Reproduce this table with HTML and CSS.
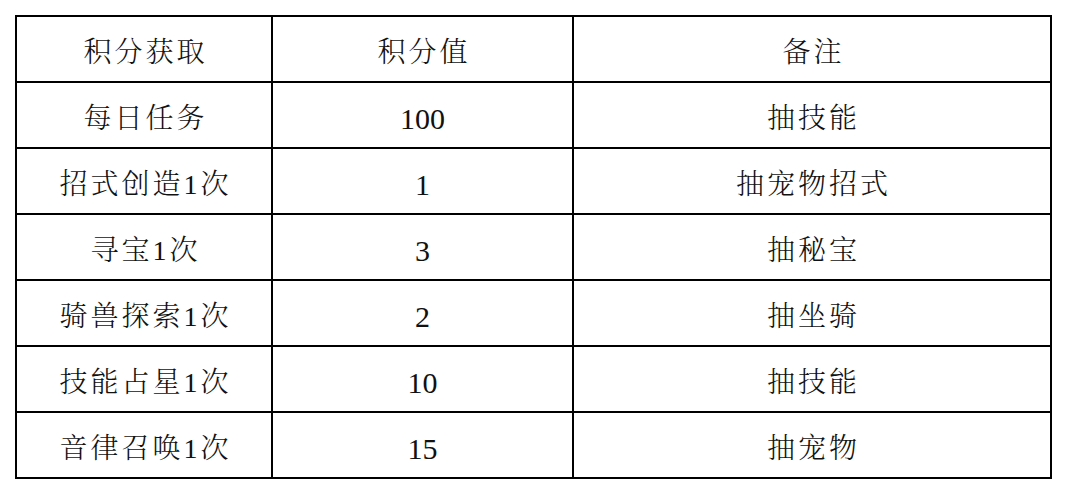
FILE: index.html
```html
<!DOCTYPE html>
<html lang="zh-CN">
<head>
<meta charset="utf-8">
<link rel="stylesheet" href="styles.css">
</head>
<body>
<div class="wrap">
<table class="points">
  <colgroup>
    <col class="c1"><col class="c2"><col class="c3">
  </colgroup>
  <tr><td>积分获取</td><td>积分值</td><td>备注</td></tr>
  <tr><td>每日任务</td><td class="num">100</td><td>抽技能</td></tr>
  <tr><td>招式创造1次</td><td class="num">1</td><td>抽宠物招式</td></tr>
  <tr><td>寻宝1次</td><td class="num">3</td><td>抽秘宝</td></tr>
  <tr><td>骑兽探索1次</td><td class="num">2</td><td>抽坐骑</td></tr>
  <tr><td>技能占星1次</td><td class="num">10</td><td>抽技能</td></tr>
  <tr><td>音律召唤1次</td><td class="num">15</td><td>抽宠物</td></tr>
</table>
</div>
</body>
</html>
```
FILE: styles.css
```css
html, body {
  margin: 0;
  padding: 0;
  background: #ffffff;
}
.wrap {
  padding: 15px 0 0 15px;
}
.points {
  border-collapse: collapse;
  table-layout: fixed;
  width: 1037px;
  font-family: "Liberation Serif", "Noto Serif CJK SC", "Noto Sans CJK SC", serif;
  font-size: 28px;
  font-weight: 300;
  color: #111;
}
.c1 { width: 256px; }
.c2 { width: 301px; }
.c3 { width: 478px; }
.points td {
  border: 2px solid #000;
  height: 57px;
  padding: 7px 0 0 3px;
  text-align: center;
  vertical-align: middle;
  letter-spacing: 3px;
  line-height: 1;
}
.points td.num {
  font-size: 30px;
  letter-spacing: 0;
  padding-left: 0;
}
```
